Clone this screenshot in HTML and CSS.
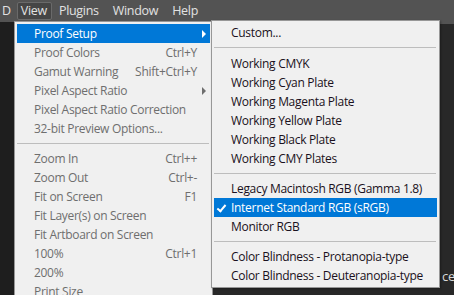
FILE: index.html
```html
<!DOCTYPE html>
<html lang="en">

<head>
 <meta charset="UTF-8">
 <meta name="viewport" content="width=device-width, initial-scale=1.0">
 <title>View Menu</title>
<link rel="stylesheet" href="styles.css">
</head>

<body>

 <div class="menubar">
  <span class="top-item cut">D</span>
  <span class="top-item open">View</span>
  <span class="top-item">Plugins</span>
  <span class="top-item">Window</span>
  <span class="top-item">Help</span>
 </div>

 <div class="workspace">
  <div class="side"></div>
  <div class="canvas">
   <span class="peek">ce</span>
  </div>
 </div>

 <ul class="menu main-menu">
  <li class="item active has-sub">Proof Setup</li>
  <li class="item off">Proof Colors<span class="key">Ctrl+Y</span></li>
  <li class="item off">Gamut Warning<span class="key">Shift+Ctrl+Y</span></li>
  <li class="item off has-sub">Pixel Aspect Ratio</li>
  <li class="item off">Pixel Aspect Ratio Correction</li>
  <li class="item off">32-bit Preview Options...</li>
  <li class="sep"></li>
  <li class="item off">Zoom In<span class="key">Ctrl++</span></li>
  <li class="item off">Zoom Out<span class="key">Ctrl+-</span></li>
  <li class="item off">Fit on Screen<span class="key">F1</span></li>
  <li class="item off">Fit Layer(s) on Screen</li>
  <li class="item off">Fit Artboard on Screen</li>
  <li class="item off">100%<span class="key">Ctrl+1</span></li>
  <li class="item off">200%</li>
  <li class="item off">Print Size</li>
 </ul>

 <ul class="menu sub-menu">
  <li class="item">Custom...</li>
  <li class="sep first"></li>
  <li class="item">Working CMYK</li>
  <li class="item">Working Cyan Plate</li>
  <li class="item">Working Magenta Plate</li>
  <li class="item">Working Yellow Plate</li>
  <li class="item">Working Black Plate</li>
  <li class="item">Working CMY Plates</li>
  <li class="sep"></li>
  <li class="item">Legacy Macintosh RGB (Gamma 1.8)</li>
  <li class="item active checked">Internet Standard RGB (sRGB)</li>
  <li class="item">Monitor RGB</li>
  <li class="sep"></li>
  <li class="item">Color Blindness - Protanopia-type</li>
  <li class="item">Color Blindness - Deuteranopia-type</li>
 </ul>

</body>

</html>
```

FILE: styles.css
```css
 body {
  margin: 0;
  width: 454px;
  height: 295px;
  overflow: hidden;
  background-color: #1f1f1f;
  font-family: 'Open Sans', 'Noto Sans', sans-serif;
  font-size: 12px;
  letter-spacing: -0.3px;
  position: relative;
 }

 .menubar {
  height: 22px;
  background-color: #535353;
  display: flex;
  align-items: center;
  color: #e2e2e2;
  font-size: 12.5px;
  letter-spacing: -0.3px;
 }

 .top-item {
  padding: 0 6px;
  height: 16px;
  line-height: 16px;
  border: 1px solid transparent;
 }

 .top-item.cut {
  margin-left: 1px;
  padding: 0 5px 0 0;
 }

 .top-item.open {
  background-color: #454545;
  border-color: #6a6a6a;
  border-radius: 2px;
  padding: 0 4px 0 3px;
 }

 .workspace {
  display: flex;
  height: 273px;
 }

 .side {
  width: 14px;
  background-color: #1e1e1e;
 }

 .canvas {
  flex: 1;
  background-color: #282828;
  border-top: 2px solid #535353;
  display: flex;
  justify-content: flex-end;
  align-items: flex-end;
  padding-bottom: 10px;
 }

 .peek {
  color: #d8d8d8;
  font-size: 13px;
  margin-right: -1px;
 }

 .menu {
  list-style: none;
  margin: 0;
  padding: 2px;
  background-color: #f0f0f0;
  border: 1px solid #979797;
  position: absolute;
  box-sizing: border-box;
 }

 .main-menu {
  left: 14px;
  top: 21px;
  width: 199px;
  height: 290px;
 }

 .sub-menu {
  left: 211px;
  top: 20px;
  width: 229px;
  padding-bottom: 2px;
  box-shadow: 1px 1px 2px rgba(0, 0, 0, 0.3);
 }

 .item {
  height: 19px;
  line-height: 19px;
  padding-left: 17px;
  padding-right: 13px;
  color: #1a1020;
  display: flex;
  justify-content: space-between;
  white-space: nowrap;
  position: relative;
 }

 .item.off {
  color: #6e6e6e;
 }

 .item.active {
  background-color: #0078d7;
  color: #fff;
 }

 .has-sub::after {
  content: '';
  position: absolute;
  right: 4px;
  top: 6px;
  border-left: 4px solid #6e6e6e;
  border-top: 4px solid transparent;
  border-bottom: 4px solid transparent;
 }

 .item.active.has-sub::after {
  border-left-color: #fff;
 }

 .checked::before {
  content: '';
  position: absolute;
  left: 5px;
  top: 5px;
  width: 3px;
  height: 7px;
  border-right: 2px solid #fff;
  border-bottom: 2px solid #fff;
  transform: rotate(40deg);
 }

 .sep {
  height: 1px;
  background-color: #bdbdbd;
  margin: 5px 1px 5px 0;
 }

 .sep.first {
  margin-bottom: 6px;
 }
```
